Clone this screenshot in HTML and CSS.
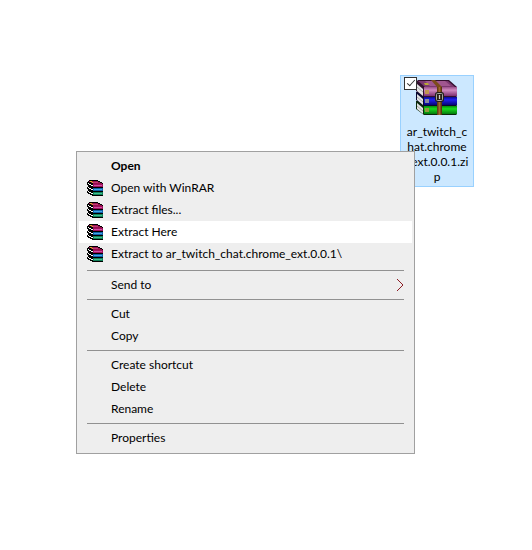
FILE: index.html
```
<!DOCTYPE html>
<html lang="en">
<head>
    <meta charset="UTF-8">
    <meta name="viewport" content="width=device-width, initial-scale=1.0">
    <title>Desktop</title>
    <link rel="stylesheet" href="styles.css">
</head>
<body>
    <svg class="defs" aria-hidden="true">
        <symbol id="rar" viewBox="0 0 16 16" shape-rendering="crispEdges">
            <!-- green book -->
            <path fill="#000" d="M1 10h14v1h1v5H5v-1H3v-1H1v-1H0v-2h1z"/>
            <path fill="#fff" d="M1 11h1v1h2v1h2v1H4v-1H2v-1H1z"/>
            <path fill="#108058" d="M6 12h10v3H6z"/>
            <path fill="#40c090" d="M7 13h8v1H7z"/>
            <!-- blue book -->
            <path fill="#000" d="M1 6h14v1h1v5H5v-1H3v-1H1V9H0V7h1z"/>
            <path fill="#fff" d="M1 7h1v1h2v1h2v1H4V9H2V8H1z"/>
            <path fill="#1060a8" d="M6 8h10v3H6z"/>
            <path fill="#40a8e8" d="M7 9h8v1H7z"/>
            <!-- purple book -->
            <path fill="#000" d="M2 0h9v1h2v1h2v1h1v5H5V7H3V6H1V5H0V2h1V1h1z"/>
            <path fill="#98104c" d="M2 1h9v1h2v1h2v1H6V3H4V2H2z"/>
            <path fill="#c03878" d="M6 2h5v1H6z"/>
            <path fill="#fff" d="M1 3h1v1h2v1h2v1H4V5H2V4H1z"/>
            <path fill="#a01060" d="M6 4h10v3H6z"/>
            <path fill="#d050a0" d="M7 5h8v1H7z"/>
            <path fill="#e0b020" d="M3 1h2v1H3zM5 2h1v1H5z"/>
        </symbol>
    </svg>

    <div class="file">
        <input type="checkbox" id="fileCheck" class="file-check" checked>
        <svg class="file-icon" viewBox="0 0 42 36" aria-hidden="true">
            <defs>
                <linearGradient id="purple" x1="0" x2="0" y1="0" y2="1">
                    <stop offset="0" stop-color="#9a4f8a"/>
                    <stop offset="0.35" stop-color="#d08abf"/>
                    <stop offset="1" stop-color="#7d3070"/>
                </linearGradient>
                <linearGradient id="blue" x1="0" x2="0" y1="0" y2="1">
                    <stop offset="0" stop-color="#0a0a90"/>
                    <stop offset="0.35" stop-color="#2020f0"/>
                    <stop offset="1" stop-color="#050577"/>
                </linearGradient>
                <linearGradient id="green" x1="0" x2="0" y1="0" y2="1">
                    <stop offset="0" stop-color="#088a0c"/>
                    <stop offset="0.35" stop-color="#18dc1c"/>
                    <stop offset="1" stop-color="#057a0c"/>
                </linearGradient>
                <linearGradient id="belt" x1="0" x2="1" y1="0" y2="0">
                    <stop offset="0" stop-color="#56330c"/>
                    <stop offset="0.5" stop-color="#a46a2c"/>
                    <stop offset="1" stop-color="#472706"/>
                </linearGradient>
            </defs>
            <!-- green book -->
            <path fill="#0b2a0a" d="M0 21h40v4l1 1v8l-1 1H8l-8-6z"/>
            <path fill="#e4e4e4" d="M1 23l6 5v6l-6-5z"/>
            <path stroke="#aaa" d="M1 26l6 5" fill="none"/>
            <path fill="url(#green)" d="M8 26h33v8H8z"/>
            <!-- blue book -->
            <path fill="#080830" d="M0 12h40v4l1 1v8l-1 1H8l-8-6z"/>
            <path fill="#e4e4e4" d="M1 14l6 5v6l-6-5z"/>
            <path stroke="#aaa" d="M1 17l6 5" fill="none"/>
            <path fill="url(#blue)" d="M8 17h33v8H8z"/>
            <!-- purple book -->
            <path fill="#33102e" d="M0 2l2-2h31l8 7v8l-1 2H8l-8-6z"/>
            <path fill="#7c3870" d="M2 1h30l7 6H9z"/>
            <path fill="#a0568f" d="M9 1h20l6 5H14z"/>
            <path fill="#e4e4e4" d="M1 4l6 5v7l-6-5z"/>
            <path stroke="#aaa" d="M1 7l6 5" fill="none"/>
            <path fill="url(#purple)" d="M8 7h33v9H8z"/>
            <!-- spine labels -->
            <path fill="#c09650" d="M9 10h4v4H9z"/>
            <path fill="#b9a832" d="M8 3h4l1 2h-4z"/>
            <path fill="#8888a0" d="M9 19h4v4H9z"/>
            <path fill="#91993d" d="M9 28h4v4H9z"/>
            <!-- belt -->
            <path fill="#7c4c1c" d="M15 0h4l7 7h-5z"/>
            <path fill="url(#belt)" d="M21 7h5v28h-5z"/>
            <rect x="20.5" y="13.5" width="6" height="7" rx="1" fill="#4a3a28" stroke="#24201c" stroke-width="3"/>
            <rect x="20.5" y="13.5" width="6" height="7" rx="1" fill="none" stroke="#a8a8a0"/>
            <path stroke="#ccc" d="M23.5 15v4"/>
        </svg>
        <label class="file-name" for="fileCheck">ar_twitch_c<br>hat.chrome<br>_ext.0.0.1.zi<br>p</label>
    </div>

    <div class="menu" role="menu">
        <button class="item default" role="menuitem">Open</button>
        <button class="item" role="menuitem"><svg class="icon" aria-hidden="true"><use href="#rar"/></svg>Open with WinRAR</button>
        <button class="item" role="menuitem"><svg class="icon" aria-hidden="true"><use href="#rar"/></svg>Extract files...</button>
        <button class="item active" role="menuitem"><svg class="icon" aria-hidden="true"><use href="#rar"/></svg>Extract Here</button>
        <button class="item" role="menuitem"><svg class="icon" aria-hidden="true"><use href="#rar"/></svg>Extract to ar_twitch_chat.chrome_ext.0.0.1\</button>
        <hr class="extended">
        <button class="item" role="menuitem">Send to
            <svg class="arrow" viewBox="0 0 8 14" aria-hidden="true"><path d="M1 1l6 6-6 6"/></svg>
        </button>
        <hr>
        <button class="item" role="menuitem">Cut</button>
        <button class="item" role="menuitem">Copy</button>
        <hr>
        <button class="item" role="menuitem">Create shortcut</button>
        <button class="item" role="menuitem">Delete</button>
        <button class="item" role="menuitem">Rename</button>
        <hr>
        <button class="item" role="menuitem">Properties</button>
    </div>
</body>
</html>
```
FILE: styles.css
```
body {
    margin: 0;
    min-height: 100vh;
    position: relative;
    background: #fff;
    color: #000;
    font-family: Lato, "Open Sans", sans-serif;
    font-size: 12px;
}
.defs {
    position: absolute;
    width: 0;
    height: 0;
}
.file {
    position: absolute;
    left: 400px;
    top: 75px;
    width: 74px;
    box-sizing: border-box;
    padding: 4px 0 2px;
    border: 1px solid #99d1ff;
    background: #cce8ff;
    text-align: center;
}
.file-check {
    position: absolute;
    left: 3px;
    top: 1px;
    appearance: none;
    box-sizing: border-box;
    width: 13px;
    height: 13px;
    margin: 0;
    border: 1px solid #333;
    background: #fff;
}
.file-check:checked::after {
    content: "";
    position: absolute;
    left: 4px;
    top: 0;
    width: 3px;
    height: 7px;
    border: solid #333;
    border-width: 0 1px 1px 0;
    transform: rotate(42deg);
}
.file-icon {
    display: block;
    width: 42px;
    height: 36px;
    margin: 0 auto 8px;
}
.file-name {
    display: block;
    line-height: 15px;
}
.menu {
    position: absolute;
    left: 76px;
    top: 151px;
    width: 339px;
    box-sizing: border-box;
    padding: 3px 2px 4px;
    border: 1px solid #a0a0a0;
    background: #eee;
}
.item {
    display: flex;
    align-items: center;
    width: 100%;
    height: 22px;
    padding: 0 8px 1px 32px;
    border: none;
    background: none;
    color: inherit;
    font: inherit;
    text-align: left;
}
.item:hover,
.item.active {
    background: #fff;
}
.default {
    font-weight: bold;
}
.icon {
    width: 16px;
    height: 16px;
    margin: 0 8px 0 -24px;
}
.arrow {
    width: 8px;
    height: 14px;
    margin-left: auto;
    fill: none;
    stroke: #8c1c24;
}
hr {
    height: 1px;
    margin: 3px 8px;
    border: none;
    background: #919191;
}
.extended {
    margin-top: 5px;
}
```
